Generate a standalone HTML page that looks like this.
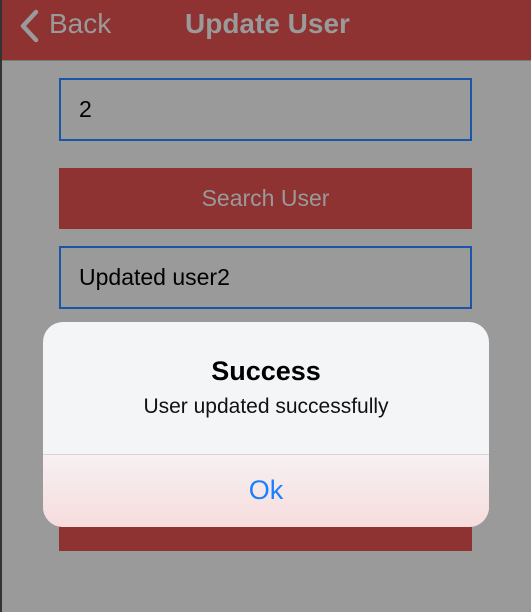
<!DOCTYPE html>
<html><head><style>
body{margin:0;width:531px;height:612px;background:#9a9a9a;position:relative;overflow:hidden;font-family:"Liberation Sans",sans-serif}
.lb{position:absolute;left:0;top:0;width:2px;height:612px;background:#333}
.hd{position:absolute;left:2px;top:0;width:529px;height:60px;background:#8e3232;border-bottom:1px solid #7a7a7a}
.t{position:absolute;color:#9a9a9a}
.in{position:absolute;left:59px;width:413px;height:63px;border:2px solid #1a56a8;box-sizing:border-box;font-size:23px;color:#000;line-height:59px;padding-left:18px}
.bt{position:absolute;left:59px;width:413px;background:#8e3232;color:#9a9a9a;text-align:center;font-size:23px}
.dl{position:absolute;left:43px;top:322px;width:446px;height:205px;border-radius:20px;background:#f4f5f7;overflow:hidden}
</style></head><body>
<div class="lb"></div>
<div class="hd">
<svg style="position:absolute;left:16px;top:9px" width="22" height="34"><path d="M18 3 L5 17 L18 31" stroke="#9a9a9a" stroke-width="4.5" fill="none" stroke-linecap="round" stroke-linejoin="round"/></svg>
<div class="t" style="left:47px;top:8px;font-size:28px">Back</div>
<div class="t" style="left:183px;top:8px;font-size:28px;font-weight:bold">Update User</div>
</div>
<div class="in" style="top:78px">2</div>
<div class="bt" style="top:168px;height:61px;line-height:61px">Search User</div>
<div class="in" style="top:246px">Updated user2</div>
<div class="bt" style="top:500px;height:51px;line-height:51px"></div>
<div class="dl">
<div style="position:absolute;top:34px;width:100%;text-align:center;font-size:27px;font-weight:bold;color:#000">Success</div>
<div style="position:absolute;top:73px;width:100%;text-align:center;font-size:21px;color:#111">User updated successfully</div>
<div style="position:absolute;top:132px;width:100%;height:1px;background:#dfcfd2"></div>
<div style="position:absolute;top:133px;width:100%;height:72px;background:linear-gradient(#f6f1f2,#f7dcdd)"></div>
<div style="position:absolute;top:153px;width:100%;text-align:center;font-size:27px;color:#1a7fff">Ok</div>
</div>
</body></html>
